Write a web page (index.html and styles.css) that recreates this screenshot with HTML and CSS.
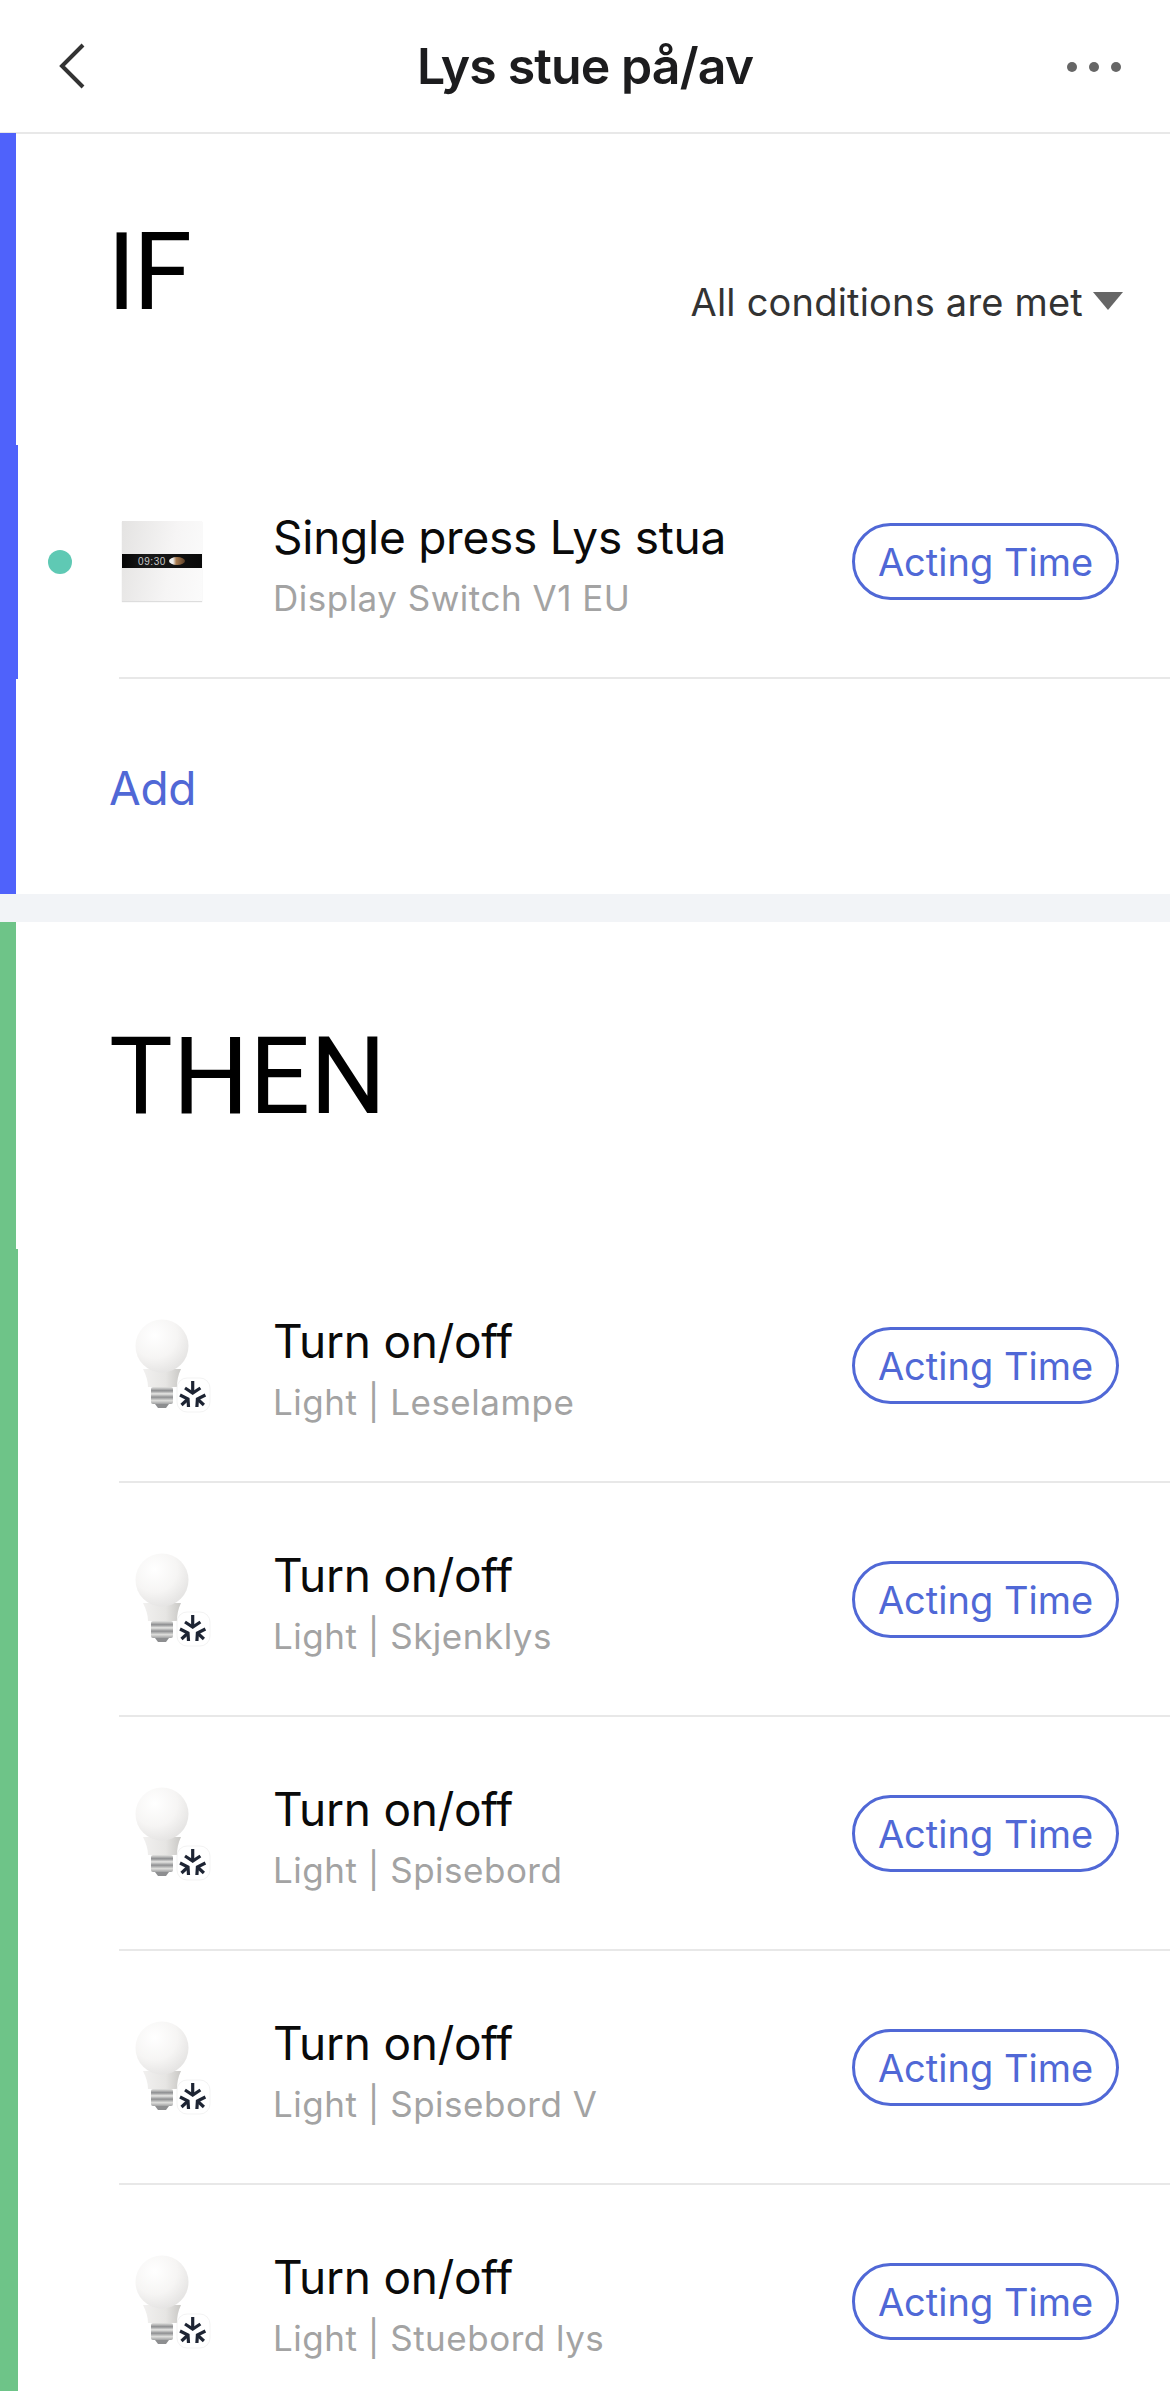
FILE: index.html
```html
<!DOCTYPE html>
<html lang="no">
<head>
<meta charset="utf-8">
<title>Lys stue på/av</title>
<link rel="stylesheet" href="styles.css">
</head>
<body>
<svg class="defs" width="0" height="0" aria-hidden="true">
  <defs>
    <radialGradient id="globe" cx="36%" cy="30%" r="78%">
      <stop offset="0" stop-color="#ffffff"/>
      <stop offset="0.55" stop-color="#f6f5f4"/>
      <stop offset="1" stop-color="#e2e1e0"/>
    </radialGradient>
    <linearGradient id="neck" x1="0" x2="1" y1="0" y2="0">
      <stop offset="0" stop-color="#f1f0ef"/>
      <stop offset="0.6" stop-color="#e6e5e3"/>
      <stop offset="1" stop-color="#c9c8c5"/>
    </linearGradient>
    <linearGradient id="screw" x1="0" x2="0" y1="0" y2="1">
      <stop offset="0" stop-color="#e4e4e2"/>
      <stop offset="0.22" stop-color="#8d8e90"/>
      <stop offset="0.4" stop-color="#e6e6e4"/>
      <stop offset="0.6" stop-color="#8f9092"/>
      <stop offset="0.8" stop-color="#dededc"/>
      <stop offset="1" stop-color="#a0a1a2"/>
    </linearGradient>
    <symbol id="bulb" viewBox="0 0 100 100">
      <path d="M21 54 C24 60 26 66 26 72 H55 C55 66 56 60 59 54 Z" fill="url(#neck)"/>
      <circle cx="40" cy="31" r="26.5" fill="url(#globe)"/>
      <rect x="29" y="72" width="22" height="17" rx="2" fill="url(#screw)"/>
      <path d="M33 89 H47 L44 93 H36 Z" fill="#8d8e90"/>
      <rect x="55" y="63" width="33" height="34" rx="10" fill="#fff" stroke="#f3f3f3"/>
      <g fill="none" stroke="#1d2433" stroke-width="3.2">
        <path d="M70.7 66 V78"/>
        <path d="M63 73 L70.7 78 L78.4 73"/>
        <path d="M59.5 90 L66 84"/>
        <path d="M58 80 L66 84 L66.5 92"/>
        <path d="M81.9 90 L75.4 84"/>
        <path d="M83.4 80 L75.4 84 L74.9 92"/>
      </g>
    </symbol>
  </defs>
</svg>

<header class="topbar">
  <svg class="back" viewBox="0 0 30 48" aria-hidden="true"><path d="M25 3 L4 24 L25 45"/></svg>
  <h1 class="page-title">Lys stue på/av</h1>
  <div class="more" aria-hidden="true"><span></span><span></span><span></span></div>
</header>

<section class="block block-if">
  <div class="block-head head-if">
    <h2 class="block-title">IF</h2>
    <div class="match">All conditions are met<span class="caret"></span></div>
  </div>
  <div class="rows">
    <article class="row">
      <div class="lead"><span class="dot"></span></div>
      <div class="body">
        <div class="thumb switch"><div class="band"><span class="clock">09:30</span><span class="moon"></span></div></div>
        <div class="texts">
          <div class="name">Single press Lys stua</div>
          <div class="sub">Display Switch V1 EU</div>
        </div>
        <button class="pill">Acting Time</button>
      </div>
    </article>
  </div>
  <div class="add">Add</div>
</section>

<div class="gap"></div>

<section class="block block-then">
  <div class="block-head head-then">
    <h2 class="block-title">THEN</h2>
  </div>
  <div class="rows">
    <article class="row">
      <div class="lead"></div>
      <div class="body">
        <svg class="bulb" viewBox="0 0 100 100"><use href="#bulb"/></svg>
        <div class="texts">
          <div class="name">Turn on/off</div>
          <div class="sub">Light | Leselampe</div>
        </div>
        <button class="pill">Acting Time</button>
      </div>
    </article>
    <article class="row">
      <div class="lead"></div>
      <div class="body">
        <svg class="bulb" viewBox="0 0 100 100"><use href="#bulb"/></svg>
        <div class="texts">
          <div class="name">Turn on/off</div>
          <div class="sub">Light | Skjenklys</div>
        </div>
        <button class="pill">Acting Time</button>
      </div>
    </article>
    <article class="row">
      <div class="lead"></div>
      <div class="body">
        <svg class="bulb" viewBox="0 0 100 100"><use href="#bulb"/></svg>
        <div class="texts">
          <div class="name">Turn on/off</div>
          <div class="sub">Light | Spisebord</div>
        </div>
        <button class="pill">Acting Time</button>
      </div>
    </article>
    <article class="row">
      <div class="lead"></div>
      <div class="body">
        <svg class="bulb" viewBox="0 0 100 100"><use href="#bulb"/></svg>
        <div class="texts">
          <div class="name">Turn on/off</div>
          <div class="sub">Light | Spisebord V</div>
        </div>
        <button class="pill">Acting Time</button>
      </div>
    </article>
    <article class="row">
      <div class="lead"></div>
      <div class="body">
        <svg class="bulb" viewBox="0 0 100 100"><use href="#bulb"/></svg>
        <div class="texts">
          <div class="name">Turn on/off</div>
          <div class="sub">Light | Stuebord lys</div>
        </div>
        <button class="pill">Acting Time</button>
      </div>
    </article>
  </div>
</section>
</body>
</html>
```
FILE: styles.css
```css
* { box-sizing: border-box; }
html, body { margin: 0; padding: 0; }
body {
  width: 1170px;
  height: 2391px;
  overflow: hidden;
  background: #fff;
  font-family: Inter, "Liberation Sans", sans-serif;
}
.defs { position: absolute; }

.topbar {
  height: 134px;
  border-bottom: 2px solid #e8e8e8;
  display: grid;
  grid-template-columns: 1fr auto 1fr;
  align-items: center;
  padding: 0 49px;
}
.back { width: 30px; height: 48px; fill: none; stroke: #333; stroke-width: 4; margin: -1px 0 0 9px; }
.page-title { margin: -1px 0 0; font-size: 50px; font-weight: 600; color: #1c1c1e; letter-spacing: -0.9px; }
.more { display: flex; gap: 12px; margin-top: 2px; justify-self: end; }
.more span { width: 10px; height: 10px; border-radius: 50%; background: #666; }

.block { border-left: 16px solid; }
.block-if { border-color: #4f62fb; margin-top: -1px; height: 761px; }
.gap { height: 28px; background: #f2f4f7; }
.block-then { border-color: #6ec488; }

.block-head { display: flex; justify-content: space-between; padding-left: 93px; padding-right: 47px; }
.head-if { height: 312px; padding-top: 79px; }
.head-then { height: 327px; padding-top: 94px; }
.block-title { margin: 0; font-family: Roboto, "Liberation Sans", sans-serif; font-weight: 400; font-size: 107px; line-height: 122px; color: #000; }
.head-if .block-title { margin-left: -2px; letter-spacing: -3px; }
.match { display: flex; align-items: center; gap: 10px; height: 50px; margin-top: 65px; font-size: 38px; letter-spacing: 0.2px; color: #333; }
.caret { width: 0; height: 0; border-left: 15px solid transparent; border-right: 15px solid transparent; border-top: 18px solid #666; margin-top: -2px; }

.rows { margin-left: -16px; border-left: 18px solid; }
.block-if .rows { border-color: #4f62fb; }
.block-then .rows { border-color: #6ec488; }

.row { display: flex; height: 234px; }
.lead { width: 101px; flex: none; display: flex; align-items: center; padding-left: 30px; }
.dot { width: 24px; height: 24px; border-radius: 50%; background: #5fc9b4; }
.body { flex: 1; display: flex; align-items: center; border-bottom: 2px solid #e8e8e8; padding: 0 51px 0 3px; }
.thumb { width: 80px; height: 80px; flex: none; }
.bulb { width: 100px; height: 100px; flex: none; margin-right: -20px; }
.switch { background: linear-gradient(100deg, #e4e3e2, #f6f5f5 60%, #fbfbfb); display: flex; align-items: center; box-shadow: 0 1px 1px #ddd; }
.band { width: 100%; height: 14px; background: linear-gradient(90deg, #050505, #1a1a1a 30%, #0a0a0a); display: flex; align-items: center; padding-left: 16px; gap: 3px; }
.clock { font-family: "Liberation Sans", sans-serif; font-size: 10px; letter-spacing: 0.6px; color: #c8c8c8; }
.moon { width: 16px; height: 8px; border-radius: 50%; background: linear-gradient(90deg, #eee 25%, #a87b50 45%, #5a3f28); }
.texts { margin-left: 71px; flex: 1; padding-top: 6px; }
.name { font-size: 46px; line-height: 56px; letter-spacing: -0.25px; color: #0a0a0a; }
.sub { font-size: 35px; line-height: 42px; margin-top: 12px; letter-spacing: 0.5px; color: #a3a3a3; }
.pill {
  width: 267px;
  height: 77px;
  border: 3px solid #5068d6;
  border-radius: 39px;
  background: #fff;
  color: #5068d6;
  font-family: inherit;
  font-size: 38px;
  padding: 1px 0 0;
  flex: none;
}
.add { padding-left: 93px; margin-top: 81px; font-size: 46px; line-height: 56px; letter-spacing: -0.3px; color: #5068d6; }
```
